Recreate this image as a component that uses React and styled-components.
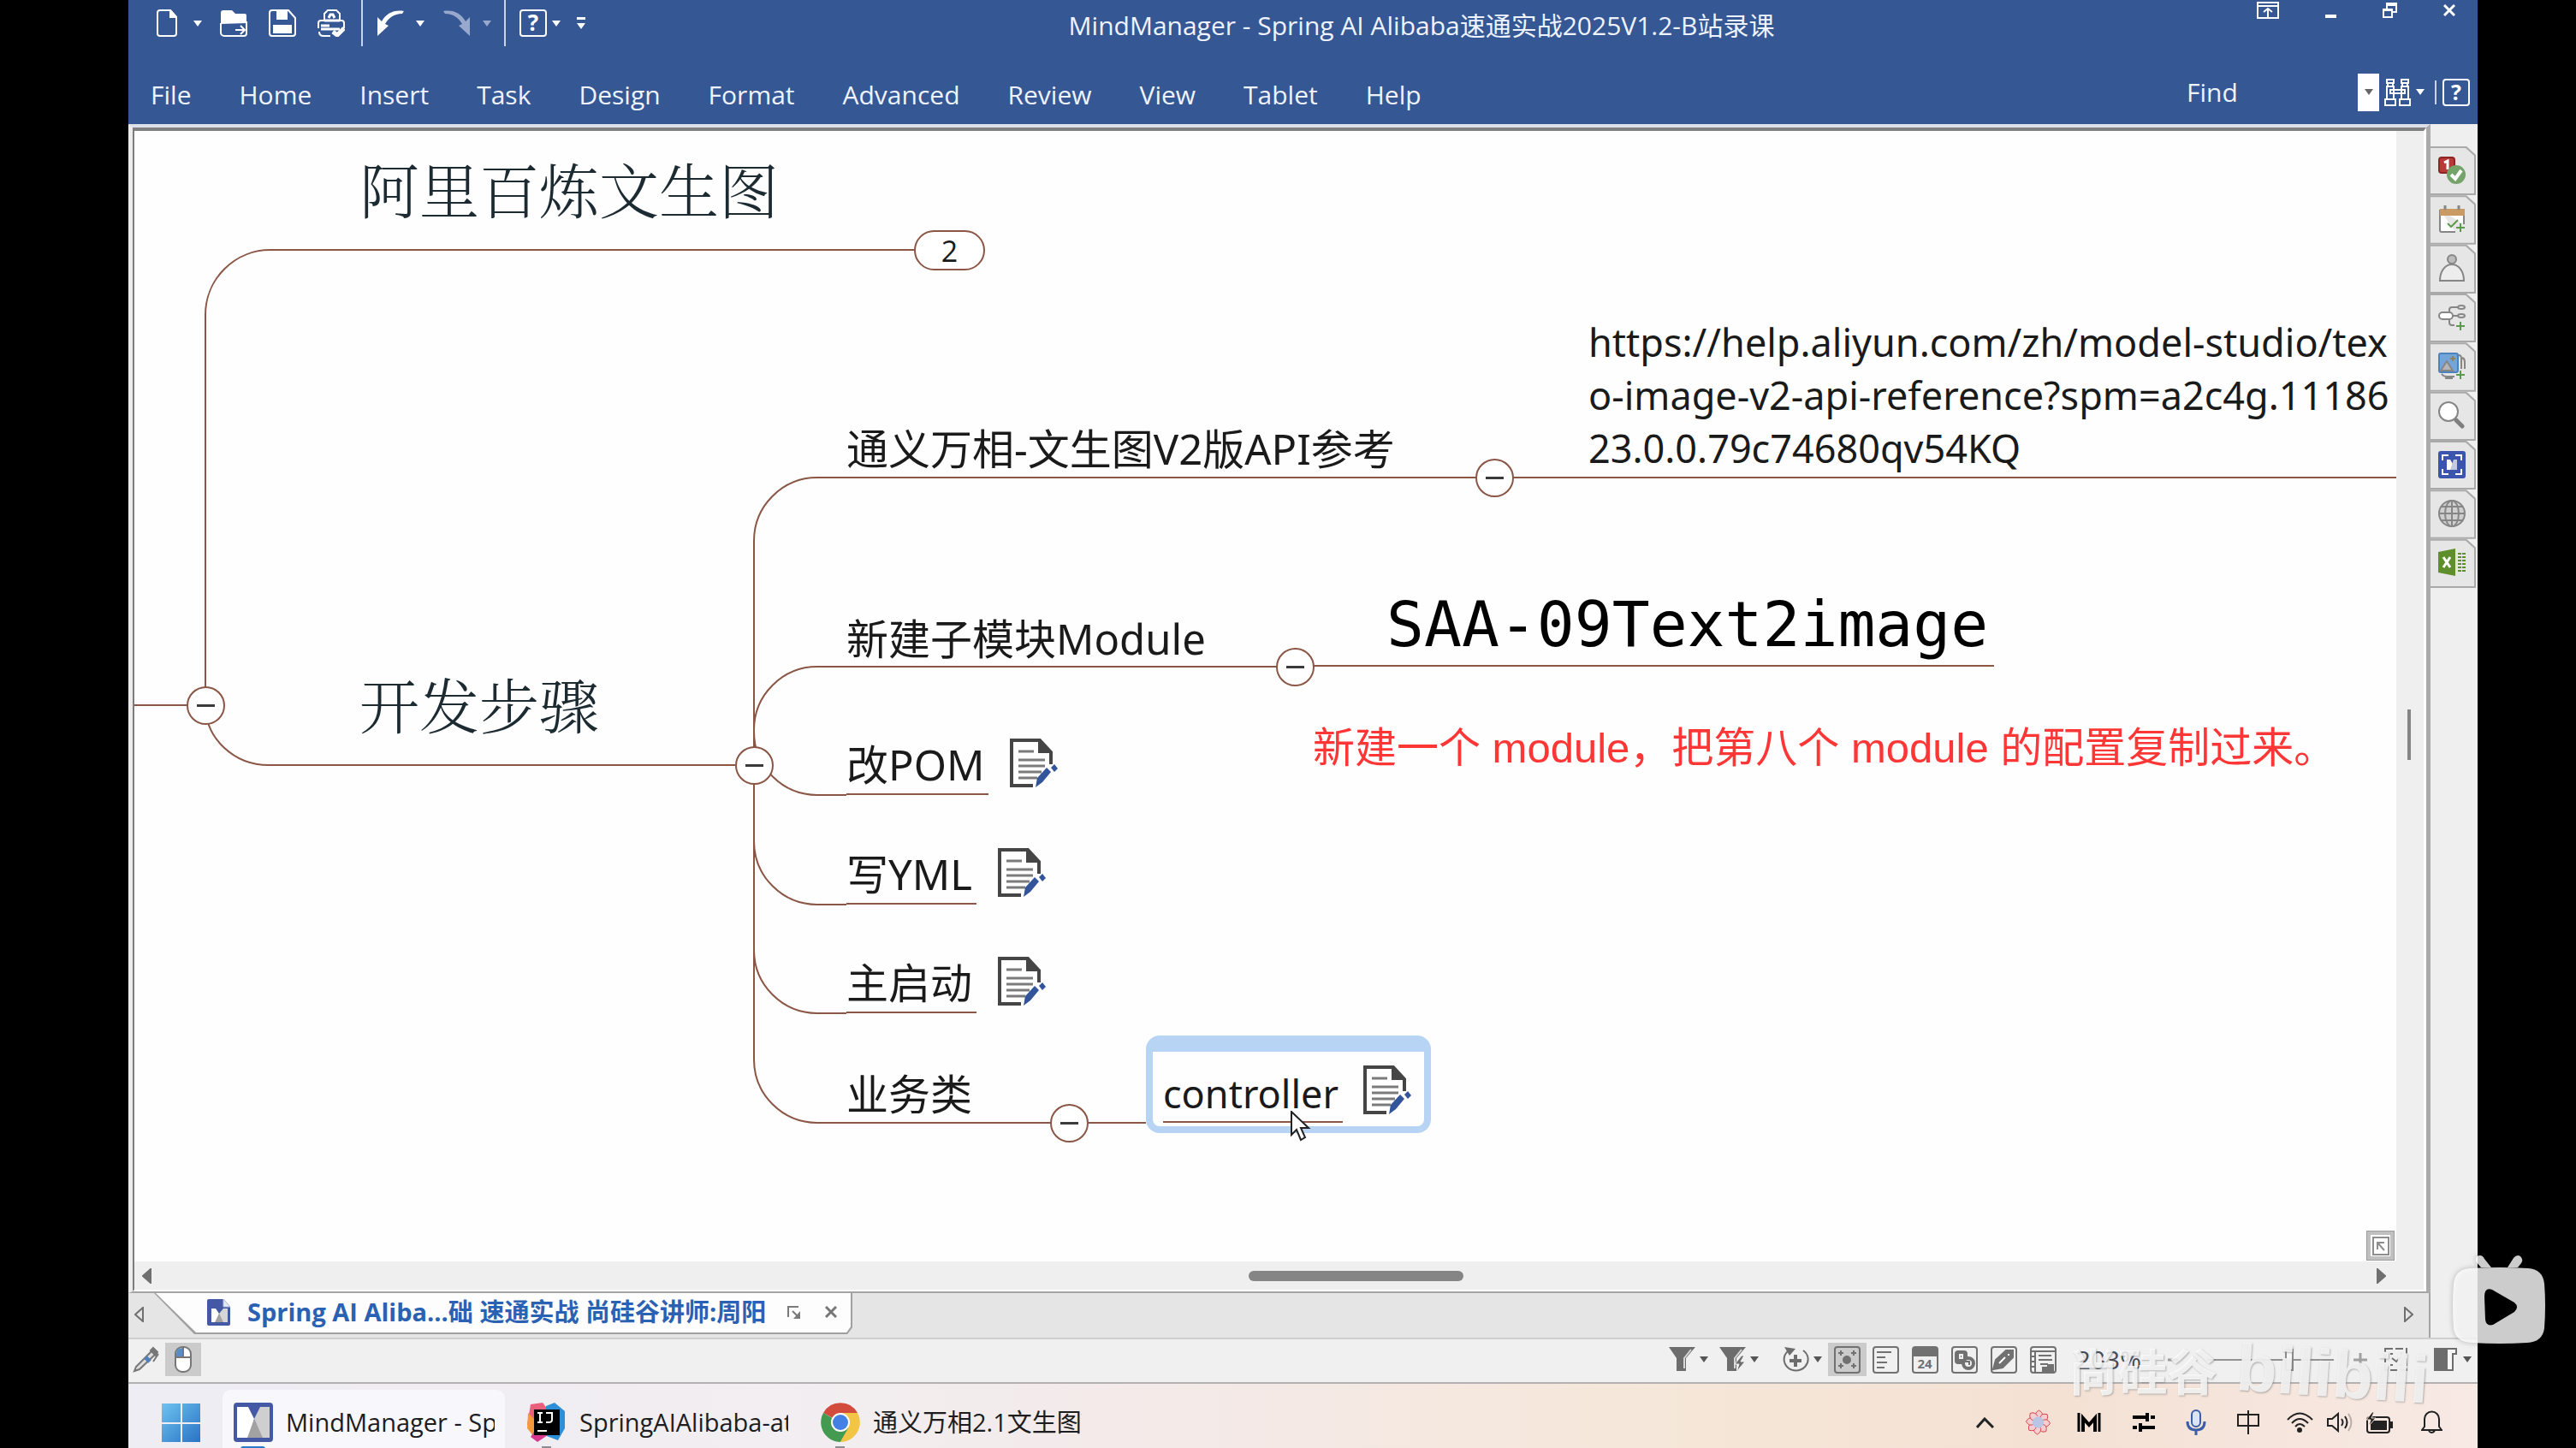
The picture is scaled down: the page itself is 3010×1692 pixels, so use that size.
import React, { useState } from 'react';
import styled, { createGlobalStyle } from 'styled-components';

const UI_FONT = '"Open Sans", "Noto Sans CJK SC", sans-serif';
const LINE = '#8a5645';

const GlobalStyle = createGlobalStyle`
  * {
    box-sizing: border-box;
  }

  body {
    margin: 0;
    background: #000;
    font-family: ${UI_FONT};
  }

  button {
    display: flex;
    align-items: center;
    justify-content: center;
    padding: 0;
    border: none;
    background: none;
    color: inherit;
    font: inherit;
  }

  svg {
    display: block;
    flex-shrink: 0;
  }
`;

const Screen = styled.div`
  position: relative;
  display: flex;
  height: 100vh;
  padding: 0 115px 0 150px;
  background: #000;
  overflow: hidden;
`;

const Window = styled.div`
  display: flex;
  flex: 1;
  flex-direction: column;
  min-width: 0;
  background: #efefef;
`;

/* ---------- header ---------- */

const Header = styled.header`
  display: flex;
  flex-direction: column;
  height: 145px;
  background: #355793;
  color: #eef3ff;
  font-size: 30px;
`;

const TitleBar = styled.div`
  display: flex;
  align-items: flex-start;
  height: 76px;
`;

const QuickAccess = styled.div`
  display: flex;
  align-items: center;
  height: 54px;
  padding-left: 33px;
`;

const ToolButton = styled.button`
  margin-right: ${(props) => props.$gap || 25}px;
`;

const Divider = styled.span`
  width: 2px;
  height: ${(props) => props.$height || 54}px;
  margin-right: ${(props) => props.$gap || 16}px;
  background: #c9d4ea;
`;

const Title = styled.h1`
  flex: 1;
  margin: 0;
  padding: 10px 24px 0 0;
  font-size: 30px;
  font-weight: 400;
  line-height: 40px;
  text-align: center;
`;

const WindowButtons = styled.div`
  display: flex;
  gap: 54px;
  padding: 0 26px 0 0;
`;

const WindowButton = styled.button`
  height: 24px;
`;

const MenuRow = styled.div`
  display: flex;
  align-items: center;
  justify-content: space-between;
  height: 69px;
  padding: 0 9px 6px 26px;
`;

const Menu = styled.nav`
  display: flex;
  gap: 56px;
  padding-top: 6px;
`;

const MenuButton = styled.button`
  line-height: 40px;
`;

const FindArea = styled.div`
  display: flex;
  align-items: center;
`;

const FindInput = styled.input`
  width: 200px;
  padding: 0;
  border: none;
  outline: none;
  background: transparent;
  color: #eef3ff;
  font: inherit;

  &::placeholder {
    color: #eef3ff;
    opacity: 1;
  }
`;

const FindDrop = styled.button`
  width: 25px;
  height: 44px;
  margin-right: 6px;
  background: #fff;
`;

/* ---------- workspace ---------- */

const Body = styled.div`
  display: flex;
  flex: 1;
  min-height: 0;
`;

const MainColumn = styled.main`
  display: flex;
  flex: 1;
  flex-direction: column;
  min-width: 0;
`;

const OuterFrame = styled.div`
  display: flex;
  flex: 1;
  min-height: 0;
  border-top: 4px solid #dce0ea;
  border-left: 5px solid #ececec;
  border-right: 5px solid #ababab;
  border-bottom: 2px solid #a4a4a4;
`;

const InnerFrame = styled.div`
  display: grid;
  flex: 1;
  grid-template-columns: minmax(0, 1fr) 32px;
  grid-template-rows: minmax(0, 1fr) 33px;
  border-top: 4px solid #808080;
  border-left: 2px solid #7c7c7c;
  border-right: 3px solid #fff;
  border-bottom: 2px solid #fff;
  background: #efefef;
`;

const Canvas = styled.section`
  position: relative;
  overflow: hidden;
  background: #fefefe;
  color: #1a1a1a;
`;

const Connectors = styled.svg`
  position: absolute;
  left: 0;
  top: 0;
`;

const Node = styled.div`
  position: absolute;
  left: ${(props) => props.$x}px;
  top: ${(props) => props.$y}px;
  display: flex;
  align-items: flex-start;
  gap: 25px;
  white-space: nowrap;
`;

const Topic = styled.span`
  padding: 0 5px 4px 0;
  border-bottom: 2px solid ${(props) => (props.$underline ? LINE : 'transparent')};
  font-family: "Noto Sans", "Noto Sans CJK SC", sans-serif;
  font-size: 49px;
  line-height: 60px;
`;

const MainTopic = styled.span`
  color: #1c2a31;
  font-family: "Noto Serif CJK SC", "Noto Sans CJK SC", serif;
  font-size: 70px;
  font-weight: 300;
  line-height: 80px;
`;

const LinkTopic = styled.a`
  color: #1a1a1a;
  font-family: "Noto Sans", sans-serif;
  font-size: 45px;
  line-height: 62px;
  text-decoration: none;
`;

const CodeTopic = styled.span`
  color: #000;
  font-family: "DejaVu Sans Mono", monospace;
  font-size: 73px;
  line-height: 80px;
`;

const RedNote = styled.span`
  color: #ff3636;
  font-family: "Liberation Sans", "Noto Sans CJK SC", sans-serif;
  font-size: 49px;
  line-height: 60px;
`;

const Selection = styled.div`
  position: absolute;
  left: 1182px;
  top: 1057px;
  display: flex;
  align-items: flex-start;
  gap: 24px;
  height: 114px;
  padding: 16px 15px 0 12px;
  border: 8px solid #b7d4f4;
  border-top-width: 19px;
  border-radius: 16px;
  background: #fefefe;
`;

const SelectedTopic = styled.span`
  padding-right: 5px;
  border-bottom: 2px solid ${LINE};
  font-family: "Noto Sans", sans-serif;
  font-size: 45px;
  line-height: 65px;
`;

const Toggle = styled.button`
  position: absolute;
  left: ${(props) => props.$x}px;
  top: ${(props) => props.$y}px;
  width: 45px;
  height: 45px;
  border: 2px solid ${LINE};
  border-radius: 50%;
  background: #fff;

  &::before {
    width: 21px;
    height: 3px;
    background: #3a3a3a;
    content: '';
  }
`;

const CountPill = styled.button`
  position: absolute;
  left: 911px;
  top: 116px;
  width: 83px;
  height: 47px;
  border: 2px solid ${LINE};
  border-radius: 24px;
  background: #fff;
  font-size: 34px;
`;

const Cursor = styled.svg`
  position: absolute;
  left: 1351px;
  top: 1145px;
`;

const FitMap = styled.button`
  position: absolute;
  right: 3px;
  bottom: 2px;
  width: 31px;
  height: 33px;
  border: 4px solid #c0c0c0;
  outline: 1px solid #9d9d9d;
  background: #fff;
`;

const VerticalScroll = styled.div`
  padding: 676px 15px 0 13px;
`;

const VerticalThumb = styled.div`
  height: 59px;
  background: #858585;
`;

const HorizontalScroll = styled.div`
  display: flex;
  align-items: center;
  justify-content: space-between;
  padding: 0 12px 0 9px;
`;

const ScrollTrack = styled.div`
  flex: 1;
  padding-left: 16px;
`;

const HorizontalThumb = styled.div`
  width: 251px;
  height: 12px;
  margin-left: 49%;
  border-radius: 6px;
  background: #858585;
`;

const TabRow = styled.div`
  display: flex;
  align-items: flex-start;
  height: 52px;
  padding-left: 7px;
  border-right: 2px solid #a4a4a4;
  background: #e5e5e5;
`;

const ScrollTabs = styled.button`
  height: 50px;
  margin-right: ${(props) => props.$gap}px;
`;

const TabEdge = styled.div`
  padding: 0 2px 2px 0;
  background: #a0a0a0;
  clip-path: polygon(0 0, 100% 0, 100% calc(100% - 8px), calc(100% - 6px) 100%, 47px 100%);
`;

const DocumentTab = styled.div`
  display: flex;
  align-items: center;
  height: 46px;
  padding: 0 16px 2px 62px;
  background: #fdfdfd;
  clip-path: polygon(2px 0, 100% 0, 100% calc(100% - 7px), calc(100% - 5px) 100%, 49px 100%);
  color: #2b61b3;
  font-size: 29px;
  font-weight: 700;
`;

const TabTitle = styled.span`
  margin: 0 25px 0 20px;
  line-height: 44px;
  white-space: nowrap;
`;

const Spacer = styled.span`
  flex: 1;
`;

const SidePanel = styled.aside`
  width: 55px;
  padding: 26px 2px 0 0;
`;

const SideTabs = styled.div`
  display: grid;
  grid-auto-rows: 1fr;
  height: 516px;
`;

const SideTab = styled.button`
  width: 53px;
  padding: 0 2px 2px 0;
  background: #a9a9a9;
  clip-path: polygon(0 0, calc(100% - 11px) 0, 100% 10px, 100% 100%, 0 100%);
  align-items: stretch;
`;

const SideTabFace = styled.span`
  display: flex;
  flex: 1;
  align-items: center;
  justify-content: flex-start;
  padding-left: 9px;
  background: #e6e6e6;
  clip-path: polygon(0 2px, calc(100% - 10px) 2px, 100% 11px, 100% 100%, 0 100%);
`;

/* ---------- status bar ---------- */

const StatusBar = styled.footer`
  display: flex;
  align-items: center;
  height: 52px;
  padding: 0 5px 3px;
  border-top: 2px solid #cfcfcf;
  background: #f0f0f0;
  color: #454b57;
  font-size: 30px;
`;

const StatusButton = styled.button`
  height: 39px;
  padding: 0 ${(props) => props.$pad || 0}px;
  margin-right: ${(props) => props.$gap || 0}px;
  background: ${(props) => (props.$active ? '#cbcbcb' : 'transparent')};
`;

const ZoomValue = styled.span`
  margin: 0 31px 0 15px;
  line-height: 40px;
`;

const ZoomSlider = styled.input`
  width: 148px;
  height: 28px;
  margin: 0 23px 0 34px;
  appearance: none;
  background: linear-gradient(#929292, #929292) center / 100% 2px no-repeat;

  &::-webkit-slider-thumb {
    width: 10px;
    height: 26px;
    border: 2px solid #8a8a8a;
    appearance: none;
    background: #f6f6f6;
  }
`;

/* ---------- task bar ---------- */

const TaskBar = styled.footer`
  display: flex;
  align-items: flex-start;
  height: 77px;
  border-top: 2px solid #b5b0b2;
  background: linear-gradient(90deg, #eeedf4 0%, #f2eef1 28%, #f4e9e6 48%, #f5e7d9 64%, #f4e1d4 82%, #f7e9e4 100%);
  color: #1d1d1f;
  font-size: 29px;
`;

const StartButton = styled.button`
  height: 90px;
  padding: 0 26px 0 39px;
`;

const Task = styled.button`
  position: relative;
  justify-content: flex-start;
  height: 76px;
  margin: 7px 13px 0 0;
  padding: 0 0 0 13px;
  border-radius: 10px 10px 0 0;
  background: ${(props) => (props.$active ? '#f8f7fb' : 'transparent')};

  &::after {
    position: absolute;
    left: 21px;
    bottom: 4px;
    width: 29px;
    height: 6px;
    border-radius: 3px;
    background: ${(props) => (props.$active ? '#2c78cc' : '#8d8d90')};
    clip-path: ${(props) => (props.$active ? 'none' : 'inset(0 9px)')};
    content: '';
  }
`;

const TaskLabel = styled.span`
  width: 244px;
  margin: 0 12px 0 15px;
  overflow: hidden;
  line-height: 42px;
  text-align: left;
  white-space: nowrap;
`;

const Tray = styled.div`
  display: flex;
  align-items: center;
  gap: ${(props) => props.$gap}px;
  height: 90px;
  padding-right: ${(props) => props.$end}px;
`;

/* ---------- overlays ---------- */

const Watermark = styled.div`
  position: absolute;
  right: 172px;
  bottom: 32px;
  display: flex;
  align-items: center;
  gap: 22px;
  color: rgba(255, 255, 255, 0.8);
  font-family: "Liberation Sans", "Noto Sans CJK SC", sans-serif;
  font-size: 58px;
  font-weight: 700;
  line-height: 110px;
  text-shadow: 1px 1px 2px rgba(110, 110, 110, 0.5);
  pointer-events: none;
`;

const WatermarkLogo = styled.span`
  color: rgba(244, 244, 244, 0.9);
  font-size: 78px;
  transform: rotate(4deg);
`;

const PlayerButton = styled.button`
  position: absolute;
  right: 35px;
  bottom: 122px;
  filter: drop-shadow(0 0 3px rgba(0, 0, 0, 0.3));
`;

/* ---------- icons ---------- */

const Caret = ({ color = '#fff', size = 10 }) => (
  <svg width={size} height="7" viewBox="0 0 10 7">
    <path d="M0 0h10L5 7z" fill={color} />
  </svg>
);

const NewIcon = () => (
  <svg width="24" height="32" viewBox="0 0 24 32" fill="none" stroke="#fff" strokeWidth="2">
    <path d="M4 1h12l7 8v19a3 3 0 0 1-3 3H4a3 3 0 0 1-3-3V4a3 3 0 0 1 3-3z" />
    <path d="M16 1v8h7z" fill="#fff" />
  </svg>
);

const OpenIcon = () => (
  <svg width="32" height="32" viewBox="0 0 32 32">
    <path d="M1 17V4a3 3 0 0 1 3-3h10l4 4h11a2 2 0 0 1 2 2v9z" fill="#fff" />
    <path d="M1 16v11a4 4 0 0 0 4 4h23a3 3 0 0 0 3-3V14" fill="none" stroke="#fff" strokeWidth="2" />
    <path d="M18 24h11M24 19l5 5-5 5" fill="none" stroke="#fff" strokeWidth="2" />
  </svg>
);

const SaveIcon = () => (
  <svg width="32" height="32" viewBox="0 0 32 32">
    <path d="M4 1h19l8 9v18a3 3 0 0 1-3 3H4a3 3 0 0 1-3-3V4a3 3 0 0 1 3-3z" fill="none" stroke="#fff" strokeWidth="2" />
    <path d="M9 1h13v11H9zM5 18h22v10H5z" fill="#fff" />
  </svg>
);

const PrintIcon = () => (
  <svg width="32" height="32" viewBox="0 0 32 32" fill="none" stroke="#fff" strokeWidth="2">
    <path d="M8 13V5l4-4h10l4 4v8M4 13h24a3 3 0 0 1 3 3v6M1 22v-6a3 3 0 0 1 3-3M2 26c0 3 2 5 5 5h8" />
    <path d="M8 13h18M13 10l2-4h3l2 4M4 19h10M4 23h22" strokeWidth="3" />
    <path d="M18 26l5 4 8-8" strokeWidth="5" />
  </svg>
);

const UndoIcon = ({ color = '#fff', flip }) => (
  <svg width="32" height="32" viewBox="0 0 32 32">
    <path
      d="M32 2C20 0 11 5 6 14L1 9v22l13-12-4-2c4-7 10-12 20-12z"
      fill={color}
      transform={flip ? 'translate(32 0) scale(-1 1)' : undefined}
    />
  </svg>
);

const HelpIcon = ({ glyph = 26 }) => (
  <svg width="32" height="32" viewBox="0 0 32 32">
    <rect x="1" y="1" width="30" height="30" rx="3" fill="none" stroke="#fff" strokeWidth="2" />
    <text x="16" y="25" fill="#fff" fontSize={glyph} fontWeight="700" textAnchor="middle" fontFamily="Open Sans">?</text>
  </svg>
);

const OverflowIcon = () => (
  <svg width="10" height="14" viewBox="0 0 10 14" fill="#fff">
    <path d="M0 0h10v3H0zM0 7h10l-5 7z" />
  </svg>
);

const RibbonIcon = () => (
  <svg width="26" height="20" viewBox="0 0 26 20" fill="none" stroke="#fff" strokeWidth="2">
    <path d="M1 1h24v18H1zM1 5h24M13 19V8M8 12l5-4 5 4" />
  </svg>
);

const MinimizeIcon = () => (
  <svg width="13" height="20" viewBox="0 0 13 20">
    <path d="M0 15h13v4H0z" fill="#fff" />
  </svg>
);

const RestoreIcon = () => (
  <svg width="17" height="18" viewBox="0 0 17 18" fill="none" stroke="#fff" strokeWidth="2">
    <path d="M1 8h10v9H1zM5 8V1h11v10h-5M5 3h11M1 9h10" />
  </svg>
);

const CloseIcon = ({ color = '#fff' }) => (
  <svg width="14" height="14" viewBox="0 0 14 14">
    <path d="M1 1l12 12M13 1L1 13" stroke={color} strokeWidth="3" />
  </svg>
);

const BinocularsIcon = () => (
  <svg width="31" height="32" viewBox="0 0 31 32" fill="none" stroke="#fff" strokeWidth="2">
    <path d="M3 1h8v4H3zM20 1h8v4h-8zM4 5v4M10 5v4M21 5v4M27 5v4" />
    <path d="M3 9h8v15H3zM20 9h8v15h-8zM1 24h12v7H1zM18 24h12v7H18zM7 13h17v4H7z" />
  </svg>
);

const NoteIcon = () => (
  <svg width="56" height="57" viewBox="0 0 56 57">
    <path d="M27 55H2V2h33l13 14v14" fill="none" stroke="#454545" strokeWidth="4" />
    <path d="M33 2v15h16z" fill="#454545" />
    <path d="M10 15h18M10 25h31M10 32h31M10 39h27M10 46h22" stroke="#7b7b7b" strokeWidth="3" />
    <path d="M30 57l2-11 11-12 5 5-10 12z" fill="#31549a" />
    <path d="M48 34l4-4 4 5-4 4z" fill="#31549a" />
  </svg>
);

const TriangleIcon = ({ left, hollow }) => (
  <svg width="11" height="18" viewBox="0 0 11 18">
    <path
      d={left ? 'M10 1v16L1 9z' : 'M1 1v16l9-8z'}
      fill={hollow ? 'none' : '#6f6f6f'}
      stroke="#6f6f6f"
      strokeWidth="2"
    />
  </svg>
);

const MindManagerIcon = () => (
  <svg width="46" height="46" viewBox="0 0 46 46">
    <rect width="46" height="46" rx="4" fill="#4558a5" />
    <path d="M4 5h13l7 14-6 22H4z" fill="#fff" />
    <path d="M42 5H31l-7 14 9 22h9z" fill="#cfcfcf" />
    <path d="M24 19l10 22H16z" fill="#a2a2a2" />
  </svg>
);

const MapFileIcon = () => (
  <svg width="27" height="31" viewBox="0 0 27 31">
    <path d="M2 0h17l8 9v20a2 2 0 0 1-2 2H2a2 2 0 0 1-2-2V2a2 2 0 0 1 2-2z" fill="#4558a5" />
    <path d="M19 0v9h8z" fill="#e4e8f4" stroke="#b6bedb" />
    <path d="M5 11h5l4 6-4 10H5z" fill="#fff" />
    <path d="M24 11h-5l-5 6 4 10h6z" fill="#d6d6d6" />
    <path d="M14 17l5 10H9z" fill="#a2a2a2" />
  </svg>
);

const PopOutIcon = () => (
  <svg width="16" height="15" viewBox="0 0 16 15">
    <path d="M1 13V1h12M6 6l7 7" fill="none" stroke="#7a7a7a" strokeWidth="2" />
    <path d="M15 6v9H7z" fill="#7a7a7a" />
  </svg>
);

const gray = '#868686';

const sideIcons = [
  ['Index', (
    <>
      <rect x="1" y="1" width="18" height="18" rx="3" fill="#b73a38" stroke="#8d2523" strokeWidth="2" />
      <path d="M7 7l4-2v10" fill="none" stroke="#fff" strokeWidth="3" />
      <circle cx="21" cy="21" r="11" fill="#74a469" />
      <path d="M15 21l5 5 7-10" fill="none" stroke="#fff" strokeWidth="4" />
    </>
  )],
  ['Task info', (
    <>
      <path d="M2 5h28v17M20 31H4a2 2 0 0 1-2-2V5" fill="#fff" stroke={gray} strokeWidth="2" />
      <path d="M2 4h29v8H2z" fill="#c99a63" />
      <path d="M8 0v5M24 0v5" stroke={gray} strokeWidth="3" />
      <path d="M11 21l4 4 8-8M26 21v10M21 26h10" fill="none" stroke="#5c9a4e" strokeWidth="2" />
    </>
  )],
  ['Resources', (
    <g fill="none" stroke={gray} strokeWidth="2">
      <circle cx="16" cy="6" r="5" fill="#bcbcbc" />
      <path d="M2 31c0-11 6-19 14-19s14 8 14 19z" fill="#ededed" />
    </g>
  )],
  ['Map parts', (
    <g fill="none" stroke={gray} strokeWidth="2">
      <rect x="1" y="10" width="16" height="8" rx="4" fill="#fff" />
      <path d="M13 10V7q0-3 3-3h8M17 14h7M13 18v4q0 3 3 3h3" />
      <ellipse cx="27" cy="4" rx="4" ry="2" />
      <ellipse cx="27" cy="14" rx="4" ry="2" />
      <path d="M26 21v10M21 26h10" stroke="#5c9a4e" />
    </g>
  )],
  ['Library', (
    <>
      <rect x="1" y="1" width="22" height="22" rx="2" fill="#74a5d8" stroke="#4c82bd" strokeWidth="2" />
      <path d="M3 21l7-11 7 11z" fill="#b5b5b5" stroke={gray} strokeWidth="2" />
      <path d="M17 4v6M14 7h6" stroke="#927f62" strokeWidth="2" />
      <path d="M24 3q3 0 3 4v12M28 6q3 1 3 5v8M4 25q2 3 6 3h9M8 30h9" fill="none" stroke={gray} strokeWidth="2" />
      <path d="M26 21v10M21 26h10" stroke="#5c9a4e" strokeWidth="2" />
    </>
  )],
  ['Search', (
    <>
      <path d="M21 22l7 7" stroke="#7e7e7e" strokeWidth="5" strokeLinecap="round" />
      <circle cx="12" cy="12" r="11" fill="#fff" stroke={gray} strokeWidth="2" />
    </>
  )],
  ['Snap', (
    <>
      <rect width="32" height="32" rx="3" fill="#3b55ae" />
      <path d="M5 11V5h7M20 5h7v6M27 21v6h-7M12 27H5v-6" fill="none" stroke="#fff" strokeWidth="2" />
      <path d="M10 10h4l3 5v7h-7z" fill="#fff" />
      <path d="M22 10h-4l-4 12h8z" fill="#c3c9df" />
    </>
  )],
  ['Browser', (
    <g fill="none" stroke={gray} strokeWidth="2">
      <circle cx="16" cy="16" r="15" fill="#cfcfcf" />
      <ellipse cx="16" cy="16" rx="8" ry="15" />
      <path d="M16 1v30M1 16h30M4 8h24M4 24h24" />
    </g>
  )],
  ['Excel', (
    <>
      <path d="M0 4l20-4v32L0 28z" fill="#5f8f2c" />
      <path d="M6 10l8 12M14 10L6 22" stroke="#fff" strokeWidth="3" />
      <path d="M25 5v23M30 5v23" stroke="#5f8f2c" strokeWidth="4" strokeDasharray="2 2" />
    </>
  )],
];

const PenIcon = () => (
  <svg width="32" height="31" viewBox="0 0 32 31" fill="none" stroke="#777">
    <path d="M2 29L4 24 23 5l4 4L8 27z" fill="#ddd" strokeWidth="2" />
    <path d="M15 13l5 5" stroke="#4f80bd" strokeWidth="5" />
    <path d="M24 2l5 5-2 4-6-6zM30 9l-6 9" fill="#777" strokeWidth="2" />
  </svg>
);

const MouseIcon = () => (
  <svg width="20" height="31" viewBox="0 0 20 31">
    <rect x="1" y="1" width="18" height="29" rx="8" fill="#fff" stroke="#777" strokeWidth="2" />
    <path d="M10 2v11H2V9q0-7 8-7z" fill="#5b8bc6" />
    <path d="M10 1v12M1 13h18" stroke="#777" strokeWidth="2" />
  </svg>
);

const FilterIcon = ({ power }) => (
  <svg width="31" height="29" viewBox="0 0 31 29" fill="#6d6d6d">
    <path d="M0 0h31L20 13v15H9V13z" />
    <path d="M26 3l-8 10v12" fill="none" stroke="#d7d7d7" strokeWidth="2" />
    {power && <path d="M26 10l-8 10h5l-3 9 10-12h-5l4-7z" stroke="#f0f0f0" />}
  </svg>
);

const ZoomFocusIcon = () => (
  <svg width="31" height="32" viewBox="0 0 31 32" fill="none" stroke="#6d6d6d" strokeWidth="2">
    <path d="M6 6a14 13 0 1 0 18-1" />
    <path d="M2 1l13 2-7 8z" fill="#6d6d6d" stroke="none" />
    <path d="M15 10v14M8 17h14" strokeWidth="4" />
  </svg>
);

const ViewIcon = ({ children }) => (
  <svg width="31" height="32" viewBox="0 0 31 32" fill="none" stroke="#717171" strokeWidth="2">
    <rect x="1" y="1" width="29" height="30" rx="3" />
    {children}
  </svg>
);

const views = [
  ['Map', (
    <>
      <circle cx="15" cy="16" r="4" fill="#717171" />
      <path d="M8 5v6M5 8h6M23 5v6M20 8h6M8 20v6M5 23h6M23 20v6M20 23h6" />
    </>
  )],
  ['Outline', <path d="M5 7h17M5 13h10M5 19h12M5 25h9" />],
  ['Schedule', (
    <>
      <path d="M2 2h27v9H2z" fill="#717171" />
      <text x="15" y="26" fill="#717171" stroke="none" fontSize="15" fontWeight="700" textAnchor="middle" fontFamily="Open Sans">24</text>
    </>
  )],
  ['Icon view', (
    <>
      <rect x="5" y="6" width="13" height="14" rx="3" fill="#717171" />
      <path d="M10 10h3v4h-3z" stroke="#f0f0f0" fill="none" />
      <circle cx="20" cy="20" r="6" fill="#f0f0f0" strokeWidth="4" />
      <path d="M15 18h6v4" />
    </>
  )],
  ['Tag view', (
    <>
      <path d="M3 27l3-11L18 5h8v8L14 25z" fill="#717171" />
      <path d="M10 20l7-7M20 10h2" stroke="#fff" />
    </>
  )],
  ['Gantt', (
    <>
      <path d="M1 6h29M6 6v25M10 11h15M10 16h16M12 21h9M2 12h3M2 18h3M2 24h3" />
      <path d="M15 25h12v6H15zM21 22h6v4h-6z" fill="#717171" />
    </>
  )],
];

const FitIcon = () => (
  <svg width="27" height="27" viewBox="0 0 27 27" fill="none" stroke="#717171" strokeWidth="2">
    <path d="M1 1h25v25H1z" strokeDasharray="9 3" />
    <path d="M9 12l5 4 5-5M7 7h3M18 20h3M7 20h3M18 7h3" />
  </svg>
);

const PanelIcon = () => (
  <svg width="27" height="27" viewBox="0 0 27 27">
    <path d="M0 0h16v27H0z" fill="#6d6d6d" />
    <path d="M16 1h10v6h-4v19h-6" fill="#f7f7f7" stroke="#6d6d6d" strokeWidth="2" />
  </svg>
);

const WindowsIcon = () => (
  <svg width="45" height="45" viewBox="0 0 45 45">
    <defs>
      <linearGradient id="win" x1="0" y1="0" x2="1" y2="1">
        <stop offset="0" stopColor="#6cc3f0" />
        <stop offset="1" stopColor="#2a72c4" />
      </linearGradient>
    </defs>
    <path d="M0 0h22v22H0zM24 0h21v22H24zM0 24h22v21H0zM24 24h21v21H24z" fill="url(#win)" />
  </svg>
);

const IdeaIcon = () => (
  <svg width="46" height="46" viewBox="0 0 46 46">
    <path d="M4 2l14-2 6 8-10 16L0 26z" fill="#e95f7c" />
    <path d="M1 12l10 10-3 18-8-10z" fill="#f49a3c" />
    <path d="M22 4l10-4 12 10v20l-8 14-16-6z" fill="#2c8fd8" />
    <path d="M8 34l16 4-12 8-8-6z" fill="#d8398f" />
    <path d="M8 8h30v30H8z" fill="#000" />
    <path d="M12 12h6M15 12v11M12 23h6M22 12h7v8q0 3-4 3h-3M12 33h11" fill="none" stroke="#fff" strokeWidth="2" />
  </svg>
);

const ChromeIcon = () => (
  <svg width="46" height="46" viewBox="0 0 46 46">
    <path d="M23 23L3 12A23 23 0 0 1 43 12z" fill="#d34b3c" />
    <path d="M23 23h-1L3 12a23 23 0 0 0 20 34l10-17z" fill="#439a50" />
    <path d="M23 12h20a23 23 0 0 1-20 34l10-18z" fill="#f2c544" />
    <circle cx="23" cy="23" r="11" fill="#fff" />
    <circle cx="23" cy="23" r="9" fill="#4580e4" />
  </svg>
);

const ChevronUpIcon = () => (
  <svg width="21" height="13" viewBox="0 0 21 13">
    <path d="M1 12L10 2l10 10" fill="none" stroke="#222" strokeWidth="3" />
  </svg>
);

const FlowerIcon = () => (
  <svg width="31" height="30" viewBox="0 0 32 32" fill="#f6cdd0" stroke="#d0454a">
    {[0, 45, 90, 135, 180, 225, 270, 315].map((angle) => (
      <path key={angle} d="M14 11q-4-6 3-10q6 3 4 9" transform={`rotate(${angle} 16 16)`} />
    ))}
    <circle cx="16" cy="16" r="7" fill="#b9c5e4" stroke="none" />
  </svg>
);

const BarsIcon = () => (
  <svg width="28" height="22" viewBox="0 0 28 22">
    <path d="M2 0v22M26 0v22" stroke="#000" strokeWidth="3" />
    <path d="M7 22V6l7 8 7-8v16" fill="none" stroke="#000" strokeWidth="4" />
  </svg>
);

const SlidersIcon = () => (
  <svg width="27" height="24" viewBox="0 0 27 24" stroke="#000">
    <path d="M1 6h15M22 6h5M1 18h5M12 18h15" strokeWidth="4" />
    <path d="M18 1v10M10 13v10" strokeWidth="4" />
  </svg>
);

const MicIcon = () => (
  <svg width="24" height="30" viewBox="0 0 24 30" fill="none" stroke="#3a5fa8" strokeWidth="2">
    <rect x="7" y="1" width="10" height="19" rx="5" fill="#dbe4f3" />
    <path d="M2 14q0 10 10 10t10-10M12 24v6" strokeWidth="3" />
  </svg>
);

const ImeIcon = () => (
  <svg width="26" height="28" viewBox="0 0 26 28" fill="none" stroke="#222" strokeWidth="2">
    <path d="M1 5h24v13H1zM13 0v28" />
  </svg>
);

const WifiIcon = () => (
  <svg width="31" height="24" viewBox="0 0 31 24" fill="none" stroke="#222" strokeWidth="2">
    <path d="M1 9q14-15 29 0M6 13q9-10 19 0M10 17q5-6 11 0" />
    <circle cx="15" cy="21" r="2" fill="#222" />
  </svg>
);

const VolumeIcon = () => (
  <svg width="30" height="24" viewBox="0 0 30 24" fill="none" stroke="#222" strokeWidth="2">
    <path d="M1 8h5l7-6v20l-7-6H1zM17 8q3 4 0 8M21 5q5 7 0 14" />
    <path d="M25 2q7 10 0 20" stroke="#bbaea8" />
  </svg>
);

const BatteryIcon = () => (
  <svg width="31" height="25" viewBox="0 0 31 25">
    <rect x="1" y="6" width="26" height="18" rx="3" fill="none" stroke="#222" strokeWidth="2" />
    <path d="M5 10h19v11H5z" fill="#222" />
    <path d="M28 11h3v8h-3z" fill="#222" />
    <path d="M7 0L0 9h5l-2 7 8-9H6l3-7z" fill="#222" stroke="#f4e3d7" />
  </svg>
);

const BellIcon = () => (
  <svg width="25" height="28" viewBox="0 0 25 28" fill="none" stroke="#222" strokeWidth="2">
    <path d="M4 19v-9a8 8 0 0 1 17 0v9l3 4H1zM9 24q3 4 7 0" />
  </svg>
);

const TvIcon = () => (
  <svg width="109" height="106" viewBox="0 0 109 106">
    <g fill="#fff" fillOpacity="0.8">
      <path d="M20 18Q3 19 1 36Q-1 61 1 88Q3 104 22 105Q55 107 87 105Q105 104 107 88Q109 61 107 36Q105 19 88 18Q55 16 20 18z" />
      <path d="M33 17l-6-7Q26 3 32 3q3 0 5 4l8 10zM64 17l7-11q4-5 8-2 4 4 1 8l-4 5z" />
    </g>
    <path d="M37 51q0-11 9-8l26 15q6 5 0 11L47 84q-8 2-9-6z" fill="#000" />
  </svg>
);

/* ---------- data ---------- */

const menuItems = ['File', 'Home', 'Insert', 'Task', 'Design', 'Format', 'Advanced', 'Review', 'View', 'Tablet', 'Help'];

const mainTopics = [
  { text: '阿里百炼文生图', x: 263, y: 27 },
  { text: '开发步骤', x: 263, y: 629 },
];

const topics = [
  { text: '通义万相-文生图V2版API参考', x: 832, y: 341 },
  { text: '新建子模块Module', x: 832, y: 563 },
  { text: '改POM', x: 832, y: 710, note: true },
  { text: '写YML', x: 832, y: 838, note: true },
  { text: '主启动', x: 832, y: 965, note: true },
  { text: '业务类', x: 832, y: 1095 },
];

// top left corner of every collapse circle on the map
const toggles = [
  [61, 649],
  [702, 719],
  [1567, 383],
  [1334, 604],
  [1070, 1137],
];

const url = [
  'https://help.aliyun.com/zh/model-studio/tex',
  'o-image-v2-api-reference?spm=a2c4g.11186',
  '23.0.0.79c74680qv54KQ',
];

const tasks = [
  { label: 'MindManager - Sp', icon: <MindManagerIcon />, active: true },
  { label: 'SpringAIAlibaba-at', icon: <IdeaIcon /> },
  { label: '通义万相2.1文生图V', icon: <ChromeIcon /> },
];

const MindMap = () => (
  <Canvas aria-label="Mind map">
    <Connectors width="2643" height="1322" fill="none" stroke={LINE} strokeWidth="2">
      <path d="M0 671H83V215A76 76 0 0 1 159 139H912" />
      <path d="M83 671A74 70 0 0 0 157 741H702" />
      <path d="M724 741V479A74 74 0 0 1 798 405H2643" />
      <path d="M724 700A74 74 0 0 1 798 626H1356" />
      <path d="M1356 625H2173" />
      <path d="M724 702A74 74 0 0 0 798 776H832" />
      <path d="M724 741V830A74 74 0 0 0 798 904H832" />
      <path d="M724 741V957A74 74 0 0 0 798 1031H832" />
      <path d="M724 741V1085A74 74 0 0 0 798 1159H1182" />
    </Connectors>
    {mainTopics.map((topic) => (
      <Node key={topic.text} $x={topic.x} $y={topic.y}>
        <MainTopic>{topic.text}</MainTopic>
      </Node>
    ))}
    {topics.map((topic) => (
      <Node key={topic.text} $x={topic.x} $y={topic.y}>
        <Topic $underline={topic.note}>{topic.text}</Topic>
        {topic.note && <NoteIcon />}
      </Node>
    ))}
    <Node $x={1699} $y={216}>
      <LinkTopic href="#text-to-image">
        {url.map((part) => <div key={part}>{part}</div>)}
      </LinkTopic>
    </Node>
    <Node $x={1463} $y={537}>
      <CodeTopic>SAA-09Text2image</CodeTopic>
    </Node>
    <Node $x={1377} $y={691}>
      <RedNote>新建一个 module，把第八个 module 的配置复制过来。</RedNote>
    </Node>
    {toggles.map(([x, y]) => (
      <Toggle key={x} $x={x} $y={y} type="button" aria-label="Collapse topic" />
    ))}
    <CountPill type="button">2</CountPill>
    <Selection>
      <SelectedTopic>controller</SelectedTopic>
      <NoteIcon />
    </Selection>
    <Cursor width="24" height="36" viewBox="0 0 24 36">
      <path d="M1 1v27l6-6 5 12 5-3-5-11h9z" fill="#fff" stroke="#222" strokeWidth="2" />
    </Cursor>
    <FitMap type="button" aria-label="Fit map">
      <svg width="20" height="22" viewBox="0 0 20 22" fill="none" stroke="#8d8d8d" strokeWidth="2">
        <path d="M1 1h18v20H1zM6 15V7h8M6 7l8 9" />
      </svg>
    </FitMap>
  </Canvas>
);

const App = () => {
  const [zoom, setZoom] = useState(66);

  return (
    <Screen>
      <GlobalStyle />
      <Window>
        <Header>
          <TitleBar>
            <QuickAccess>
              <ToolButton aria-label="New" $gap={19}><NewIcon /></ToolButton>
              <ToolButton aria-label="New options" $gap={21}><Caret /></ToolButton>
              <ToolButton aria-label="Open"><OpenIcon /></ToolButton>
              <ToolButton aria-label="Save"><SaveIcon /></ToolButton>
              <ToolButton aria-label="Print" $gap={19}><PrintIcon /></ToolButton>
              <Divider />
              <ToolButton aria-label="Undo" $gap={14}><UndoIcon /></ToolButton>
              <ToolButton aria-label="Undo options" $gap={22}><Caret /></ToolButton>
              <ToolButton aria-label="Redo" $gap={14}><UndoIcon color="#97a9cd" flip /></ToolButton>
              <ToolButton aria-label="Redo options" $gap={15}><Caret color="#97a9cd" /></ToolButton>
              <Divider />
              <ToolButton aria-label="Help" $gap={6}><HelpIcon /></ToolButton>
              <ToolButton aria-label="Help options" $gap={19}><Caret /></ToolButton>
              <ToolButton aria-label="Customize"><OverflowIcon /></ToolButton>
            </QuickAccess>
            <Title>MindManager - Spring AI Alibaba速通实战2025V1.2-B站录课</Title>
            <WindowButtons>
              <WindowButton aria-label="Ribbon"><RibbonIcon /></WindowButton>
              <WindowButton aria-label="Minimize"><MinimizeIcon /></WindowButton>
              <WindowButton aria-label="Restore"><RestoreIcon /></WindowButton>
              <WindowButton aria-label="Close"><CloseIcon /></WindowButton>
            </WindowButtons>
          </TitleBar>
          <MenuRow>
            <Menu>
              {menuItems.map((item) => <MenuButton key={item} type="button">{item}</MenuButton>)}
            </Menu>
            <FindArea>
              <FindInput aria-label="Find" placeholder="Find" />
              <FindDrop aria-label="Find history"><Caret color="#666" /></FindDrop>
              <ToolButton aria-label="Search" $gap={6}><BinocularsIcon /></ToolButton>
              <ToolButton aria-label="Search options" $gap={12}><Caret /></ToolButton>
              <Divider $height={28} $gap={7} />
              <button aria-label="Help topics"><HelpIcon glyph={25} /></button>
            </FindArea>
          </MenuRow>
        </Header>

        <Body>
          <MainColumn>
            <OuterFrame>
              <InnerFrame>
                <MindMap />
                <VerticalScroll><VerticalThumb /></VerticalScroll>
                <HorizontalScroll>
                  <TriangleIcon left />
                  <ScrollTrack><HorizontalThumb /></ScrollTrack>
                  <TriangleIcon />
                </HorizontalScroll>
              </InnerFrame>
            </OuterFrame>
            <TabRow>
              <ScrollTabs aria-label="Previous tab" $gap={12}><TriangleIcon left hollow /></ScrollTabs>
              <TabEdge>
                <DocumentTab>
                  <MapFileIcon />
                  <TabTitle>Spring AI Aliba...础 速通实战 尚硅谷讲师:周阳</TabTitle>
                  <ToolButton aria-label="Undock tab" $gap={28}><PopOutIcon /></ToolButton>
                  <button aria-label="Close tab"><CloseIcon color="#777" /></button>
                </DocumentTab>
              </TabEdge>
              <Spacer />
              <ScrollTabs aria-label="Next tab" $gap={18}><TriangleIcon hollow /></ScrollTabs>
            </TabRow>
          </MainColumn>
          <SidePanel>
            <SideTabs>
              {sideIcons.map(([name, drawing]) => (
                <SideTab key={name} type="button" aria-label={name}>
                  <SideTabFace>
                    <svg width="32" height="32" viewBox="0 0 32 32">{drawing}</svg>
                  </SideTabFace>
                </SideTab>
              ))}
            </SideTabs>
          </SidePanel>
        </Body>

        <StatusBar>
          <StatusButton aria-label="Pen" $gap={6}><PenIcon /></StatusButton>
          <StatusButton aria-label="Mouse" $pad={11} $active><MouseIcon /></StatusButton>
          <Spacer />
          <StatusButton aria-label="Filter" $gap={5}><FilterIcon /></StatusButton>
          <StatusButton aria-label="Filter options" $gap={13}><Caret color="#555" /></StatusButton>
          <StatusButton aria-label="Power filter" $gap={5}><FilterIcon power /></StatusButton>
          <StatusButton aria-label="Power filter options" $gap={28}><Caret color="#555" /></StatusButton>
          <StatusButton aria-label="Focus" $gap={5}><ZoomFocusIcon /></StatusButton>
          <StatusButton aria-label="Focus options" $gap={7}><Caret color="#555" /></StatusButton>
          {views.map(([name, drawing], index) => (
            <StatusButton key={name} aria-label={name} $pad={7} $active={index === 0} $gap={index ? 1 : 0}>
              <ViewIcon>{drawing}</ViewIcon>
            </StatusButton>
          ))}
          <ZoomValue>{zoom === 66 ? '203%' : `${zoom * 3}%`}</ZoomValue>
          <StatusButton aria-label="Zoom out">
            <svg width="12" height="4"><path d="M0 2h12" stroke="#999" strokeWidth="3" /></svg>
          </StatusButton>
          <ZoomSlider
            type="range"
            aria-label="Zoom"
            value={zoom}
            onChange={(e) => setZoom(Number(e.target.value))}
          />
          <StatusButton aria-label="Zoom in" $gap={20}>
            <svg width="16" height="16"><path d="M8 0v16M0 8h16" stroke="#a0a0a0" strokeWidth="3" /></svg>
          </StatusButton>
          <StatusButton aria-label="Fit" $gap={31}><FitIcon /></StatusButton>
          <StatusButton aria-label="Panels" $gap={7}><PanelIcon /></StatusButton>
          <StatusButton aria-label="Panel options" $gap={2}><Caret color="#555" /></StatusButton>
        </StatusBar>

        <TaskBar>
          <StartButton aria-label="Start"><WindowsIcon /></StartButton>
          {tasks.map((task) => (
            <Task key={task.label} type="button" $active={task.active}>
              {task.icon}
              <TaskLabel>{task.label}</TaskLabel>
            </Task>
          ))}
          <Spacer />
          <Tray $gap={36} $end={30}>
            <ChevronUpIcon />
            <FlowerIcon />
          </Tray>
          <Tray $gap={36} $end={32}>
            <BarsIcon />
            <SlidersIcon />
            <MicIcon />
            <ImeIcon />
          </Tray>
          <Tray $gap={16} $end={33}>
            <WifiIcon />
            <VolumeIcon />
            <BatteryIcon />
          </Tray>
          <Tray $gap={0} $end={41}>
            <BellIcon />
          </Tray>
        </TaskBar>
      </Window>

      <Watermark>
        <span>尚硅谷</span>
        <WatermarkLogo>bilibili</WatermarkLogo>
      </Watermark>
      <PlayerButton aria-label="Play"><TvIcon /></PlayerButton>
    </Screen>
  );
};

export default App;
